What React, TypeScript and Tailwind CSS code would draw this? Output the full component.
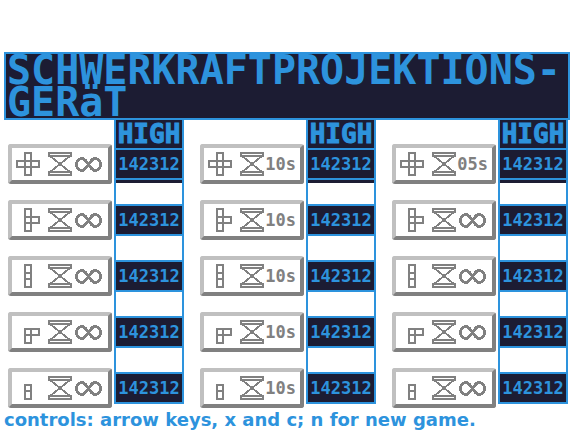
type Limit = "none" | "10s" | "05s";

const shapes = [
  { name: "plus", d: "M17 9h6v22h-6zM9 17h22v6h-22z" },
  { name: "tee", d: "M17 9h6v22h-6zM17 17h14v6h-14z" },
  { name: "bar", d: "M17 9h6v22h-6zM17 17h6v6h-6z" },
  { name: "corner", d: "M17 17h6v14h-6zM17 17h14v6h-14z" },
  { name: "domino", d: "M17 17h6v14h-6zM17 23h6" },
];

const columns: Limit[][] = [
  ["none", "none", "none", "none", "none"],
  ["10s", "10s", "10s", "10s", "10s"],
  ["05s", "none", "none", "none", "none"],
];

function ModeButton({ shape, limit }: { shape: number; limit: Limit }) {
  return (
    <button
      type="button"
      aria-label={`${shapes[shape].name}, ${limit === "none" ? "no time limit" : limit}`}
      className="relative h-10 w-26 rounded-[3px] border-4 border-t-[#c0c0c0] border-r-[#808080] border-b-[#808080] border-l-[#c0c0c0] bg-white text-[#808080]"
    >
      <svg
        className="absolute -top-1 -left-1 h-10 w-26 max-w-none"
        viewBox="0 0 104 40"
        fill="none"
        stroke="#808080"
        strokeWidth="2"
        shapeRendering="crispEdges"
        aria-hidden="true"
      >
        <path d={shapes[shape].d} />
        <path d="M41 9h22v3h-22zM41 28h22v3h-22zM42 12L62 28M62 12L42 28" />
        {limit === "none" && (
          <path
            d="M80.5 20.5C78 16.5 76.5 14.5 74 14.5a5.5 6 0 0 0 0 12c2.5 0 4-2 6.5-6c2.5-4 4-6 6.5-6a5.5 6 0 0 1 0 12c-2.5 0-4-2-6.5-6z"
            strokeWidth="3"
          />
        )}
      </svg>
      {limit !== "none" && (
        <span className="absolute top-0 right-1 font-['DejaVu_Sans_Mono',monospace] text-[17px] leading-8 font-bold">
          {limit}
        </span>
      )}
    </button>
  );
}

function ModeColumn({ limits }: { limits: Limit[] }) {
  return (
    <section className="flex w-48 shrink-0 gap-0.5 pl-2">
      <div className="flex flex-col gap-4 pt-6">
        {limits.map((limit, i) => (
          <ModeButton key={i} shape={i} limit={limit} />
        ))}
      </div>
      <div className="w-[70px] self-start border-x-2 border-[#2d93dd] text-center font-['DejaVu_Sans_Mono',monospace] font-bold text-[#2d93dd]">
        <h2 className="h-7 bg-[#1c1c33] text-[26px] leading-7 [-webkit-text-stroke:1px]">HIGH</h2>
        <ol className="flex flex-col gap-6">
          {limits.map((_, i) => (
            <li
              key={i}
              className="h-8 border-y-2 border-[#2d93dd] bg-[#1c1c33] text-[17px] leading-7 first:shadow-[0_3px_0_#1c1c33]"
            >
              142312
            </li>
          ))}
        </ol>
      </div>
    </section>
  );
}

export default function App() {
  return (
    <main className="overflow-hidden bg-white pt-13">
      <h1 className="mr-[5px] ml-1 border-2 border-[#2d93dd] bg-[#1c1c33] px-px font-['DejaVu_Sans_Mono',monospace] text-[40px] leading-8 font-bold text-[#2d93dd]">
        SCHWERKRAFTPROJEKTIONS-
        <br />
        GERäT
      </h1>
      <div className="flex">
        {columns.map((limits, i) => (
          <ModeColumn key={i} limits={limits} />
        ))}
      </div>
      <p className="ml-1 font-['DejaVu_Sans',sans-serif] text-[18px] leading-6 font-bold whitespace-nowrap text-[#2d93dd]">
        controls: arrow keys, x and c; n for new game.
      </p>
    </main>
  );
}
